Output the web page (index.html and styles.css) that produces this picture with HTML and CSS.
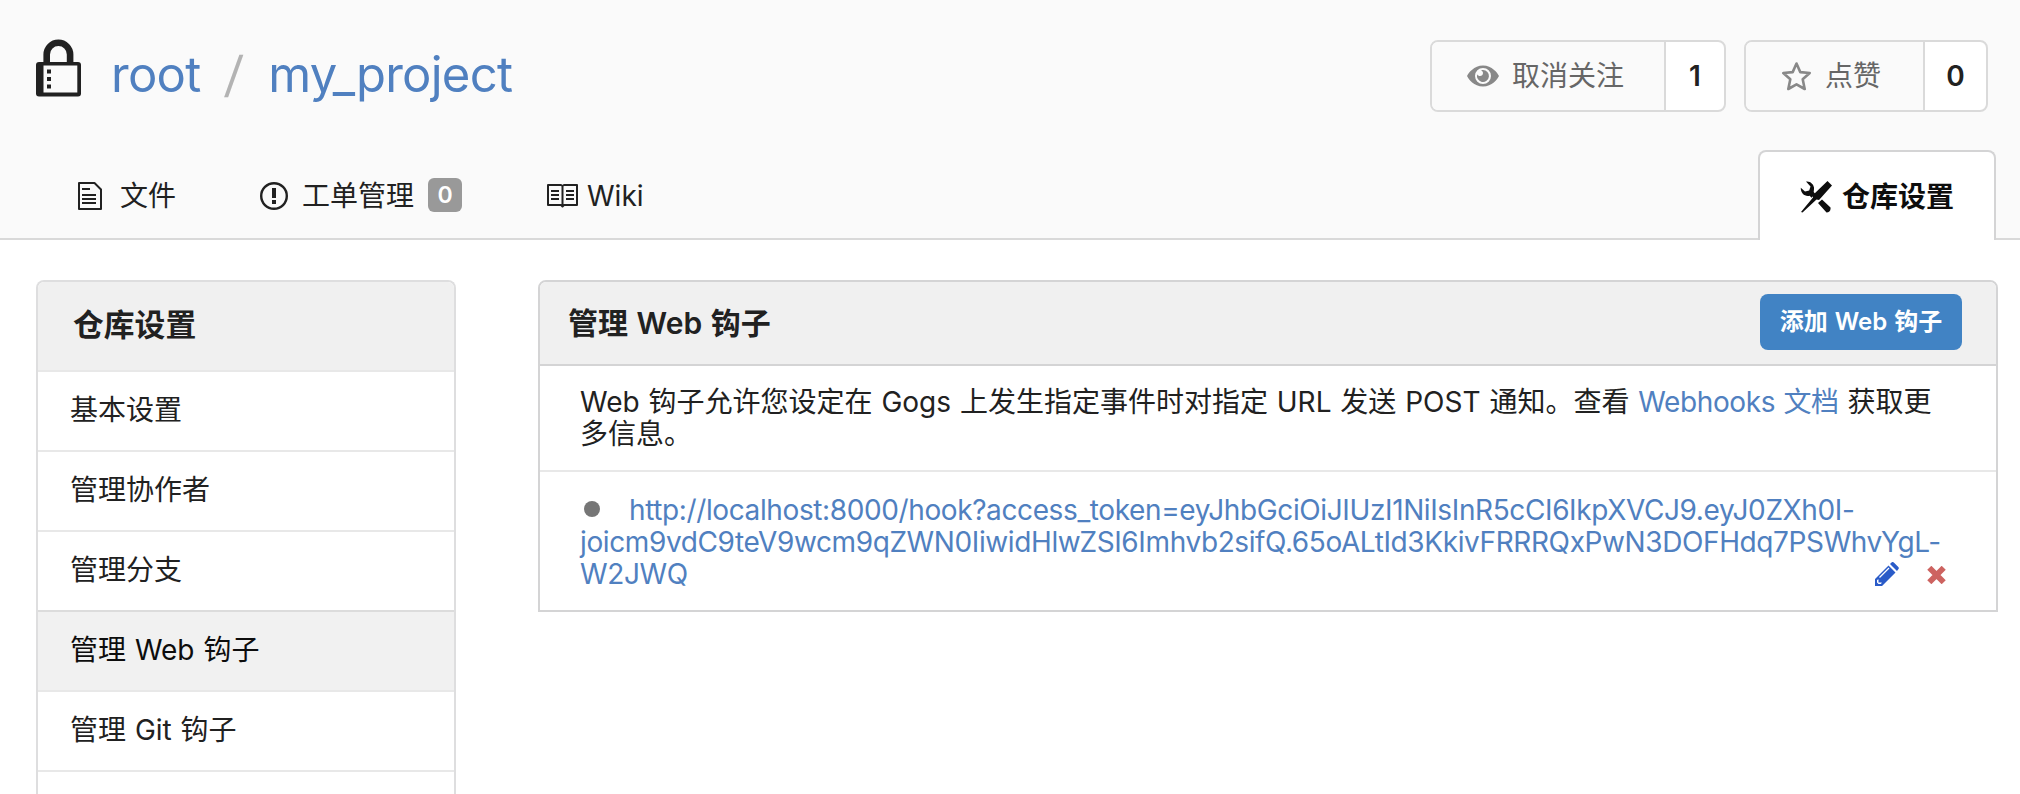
FILE: index.html
```html
<!DOCTYPE html>
<html lang="zh-CN">
<head>
<meta charset="utf-8">
<title>root/my_project</title>
<link rel="stylesheet" href="styles.css">
</head>
<body>
<header class="repo-header">
  <div class="title-row">
    <svg class="lock" viewBox="0 0 45 58"><path fill="none" stroke="#212121" stroke-width="6.6" d="M10.700 26V15.500a11.700 11.700 0 0 1 23.400 0V26"/><rect y="23" width="45" height="34.500" rx="3" fill="#212121"/><path fill="#fafafa" d="M7.500 26.500h33.800v27H7.500z"/><path fill="#212121" d="M11 30.500h4v4h-4zM11 38h4v4h-4zM11 45.500h4v4h-4z"/></svg>
    <h1 class="repo-name"><a>root</a><span class="slash">/</span><a>my_project</a></h1>
    <div class="repo-actions">
      <div class="action watch">
        <div class="action-label">
          <svg class="eye" viewBox="0 0 32 22"><path fill="#888" fill-rule="evenodd" d="M16 .5C7 .5 1.500 8 0 11c1.500 3 7 10.500 16 10.500S30.500 14 32 11C30.500 8 25 .5 16 .5zM16 3a8 8 0 1 1 0 16 8 8 0 0 1 0-16z"/><path fill="#888" d="M16 5c-.8 0-1.300.1-2 .3 1.300.6 2 1.600 2 2.800 0 1.700-1.300 3-3 3-1.200 0-2.300-.7-2.800-1.800A6 6 0 1 0 16 5z"/></svg>
          <span>取消关注</span>
        </div>
        <div class="count">1</div>
      </div>
      <div class="action star">
        <div class="action-label">
          <svg class="star-icon" viewBox="0 0 29 29"><path fill="none" stroke="#888" stroke-width="2.600" stroke-linejoin="round" d="M14.500 1.500l3.800 8.600 9.400.9-7 6.300 2 9.700-8.200-4.700L6.300 27l2-9.700-7-6.300 9.400-.9z"/></svg>
          <span>点赞</span>
        </div>
        <div class="count">0</div>
      </div>
    </div>
  </div>
  <nav class="tabs">
    <a class="tab files"><svg class="file-icon" viewBox="0 0 24 28"><path fill="none" stroke="#212121" stroke-width="2" stroke-linejoin="round" d="M1 1h15.500L23 7.500V27H1z"/><path fill="#212121" d="M4 6h8v2H4zM4 12h14v2H4zM4 16h14v2H4zM4 20h14v2H4z"/></svg><span>文件</span></a>
    <a class="tab issues"><svg class="issue-icon" viewBox="0 0 28 28"><circle cx="14" cy="14" r="12.800" fill="none" stroke="#212121" stroke-width="2.400"/><path fill="#212121" d="M12 6h4v10h-4zM12 18h4v4h-4z"/></svg><span>工单管理</span><span class="badge">0</span></a>
    <a class="tab wiki"><svg class="wiki-icon" viewBox="0 0 31 24"><path fill="none" stroke="#212121" stroke-width="2" stroke-linejoin="round" d="M1 1h13l1.500 1L17 1h13v20H17l-1.500 1.500L14 21H1zM15.500 2v20"/><path fill="#212121" d="M4 6h8v2H4zM4 10h8v2H4zM4 14h8v2H4zM19 6h8v2h-8zM19 10h8v2h-8zM19 14h8v2h-8z"/></svg><span>Wiki</span></a>
    <a class="tab active"><svg class="tools" viewBox="0 0 32 32"><path fill="#0d0d0d" d="M6 .5c4-.8 7.500 2.500 8 6 .2 2-.3 3.500-.3 4.500l1.600 2-3.800 3.800-1.800-2C4.500 16 .5 12 .8 6.800l4.200 3.700 4.200-1 1.300-4zM27.500 0L32 4.500 19 19l-2.500-.5L2.500 31.500l-1.500-.5 12-14.500L13 14zM18 22l4-3.500 8.500 8c.5 3-1.500 5-4 5z"/></svg><span>仓库设置</span></a>
  </nav>
</header>
<main class="content">
  <aside class="menu">
    <div class="menu-head">仓库设置</div>
    <a class="item">基本设置</a>
    <a class="item">管理协作者</a>
    <a class="item before-active">管理分支</a>
    <a class="item current">管理 Web 钩子</a>
    <a class="item">管理 Git 钩子</a>
  </aside>
  <section class="panel">
    <div class="panel-head"><h2>管理 Web 钩子</h2><a class="button">添加 Web 钩子</a></div>
    <div class="desc">Web 钩子允许您设定在 Gogs 上发生指定事件时对指定 URL 发送 POST 通知。查看 <a>Webhooks 文档</a> 获取更<br>多信息。</div>
    <div class="hook">
      <a class="hook-url"><span class="dot"></span>http://localhost:8000/hook?access_token=eyJhbGciOiJIUzI1NiIsInR5cCI6IkpXVCJ9.eyJ0ZXh0I-<br>joicm9vdC9teV9wcm9qZWN0IiwidHlwZSI6Imhvb2sifQ.65oALtId3KkivFRRRQxPwN3DOFHdq7PSWhvYgL-<br>W2JWQ</a>
      <div class="hook-tools">
        <svg class="pencil" viewBox="0 0 24 24"><path fill="#2a5bc8" d="M0 24v-7L13.500 3.500l7 7L7 24zM15 2l1.500-1.500c.7-.7 1.600-.7 2.300 0l4.500 4.500c.7.700.7 1.600 0 2.300L22 9z"/><path fill="none" stroke="#fff" stroke-width="1.200" d="M4.500 15.500L14 6"/><path fill="#fff" d="M2 18l1.500-.8v3.300h3.300L6 22H3.500L2 20.500z"/></svg>
        <svg class="remove" viewBox="0 0 18 18"><path stroke="#cd6360" stroke-width="5.800" d="M1.800 1.800l14.400 14.400M16.200 1.800L1.800 16.200"/></svg>
      </div>
    </div>
  </section>
</main>
</body>
</html>
```

FILE: styles.css
```css
* { box-sizing: border-box; }
html { overflow: hidden; }
body { margin: 0; height: 794px; overflow: hidden; background: #fff; color: #212121; font: 28px/32px Inter, "Noto Sans CJK SC", sans-serif; word-spacing: 1px; }
svg { display: block; flex: none; }
a { color: #5080c0; }
.repo-header { height: 240px; background: #fafafa; border-bottom: 2px solid #d9d9d9; }
.title-row { height: 150px; padding: 39px 32px 0 36px; display: flex; align-items: flex-start; }
.lock { width: 45px; height: 58px; }
.repo-name { margin: 0 0 0 30px; padding-top: 8px; font-size: 49px; line-height: 56px; letter-spacing: -0.75px; font-weight: 400; display: flex; }
.slash { color: #b3b3b3; margin: 0 26px 0 25px; transform: skewX(-5deg); }
.repo-actions { margin: 1px 0 0 auto; display: flex; gap: 18px; }
.action { display: flex; height: 72px; border: 2px solid #dadada; border-radius: 8px; background: #fff; overflow: hidden; }
.action-label { background: #fafafa; color: #666; display: flex; align-items: center; border-right: 2px solid #dadada; }
.watch { width: 296px; }
.watch .action-label { width: 234px; padding-left: 35px; }
.star { width: 244px; }
.star .action-label { width: 179px; padding-left: 36px; }
.eye { width: 32px; height: 22px; margin-right: 13px; }
.star-icon { width: 29px; height: 29px; margin-right: 14px; }
.count { flex: 1; display: flex; align-items: center; justify-content: center; font-weight: 600; }
.tabs { height: 90px; padding: 0 24px 0 78px; display: flex; align-items: flex-start; }
.tab { height: 90px; padding-top: 2px; display: flex; align-items: center; color: #212121; }
.file-icon { width: 24px; height: 28px; margin-right: 18px; }
.issues { margin-left: 84px; }
.issue-icon { width: 28px; height: 28px; margin-right: 14px; }
.badge { width: 34px; height: 34px; margin: 0 0 2px 14px; border-radius: 6px; background: #999; color: #fff; font-weight: 600; font-size: 23px; line-height: 34px; text-align: center; }
.wiki { margin-left: 85px; }
.wiki-icon { width: 31px; height: 24px; margin-right: 9px; }
.tab.active { margin-left: auto; width: 238px; padding-left: 40px; border: 2px solid #d4d4d5; border-bottom: 0; border-radius: 8px 8px 0 0; background: #fff; color: #0d0d0d; font-weight: 700; }
.tools { width: 32px; height: 32px; margin-right: 10px; }
.content { display: flex; align-items: flex-start; gap: 82px; padding: 40px 22px 0 36px; }
.menu { width: 420px; height: 514px; flex: none; border: 2px solid #dededf; border-bottom: 0; border-radius: 8px 8px 0 0; overflow: hidden; }
.menu-head { height: 90px; padding-left: 35px; border-bottom: 2px solid #e8e8e8; background: #f0f0f0; font-size: 30.800px; line-height: 86px; font-weight: 700; }
.item { display: block; height: 80px; padding-left: 32px; border-bottom: 2px solid #e8e8e8; line-height: 76px; color: #212121; }
.before-active { border-bottom-color: #dcdcdc; }
.current { background: #f1f1f1; color: #0d0d0d; }
.panel { flex: 1; border: 2px solid #d4d4d5; border-radius: 8px 8px 0 0; }
.panel-head { height: 84px; padding: 12px 34px 0 28px; display: flex; justify-content: space-between; background: #f0f0f0; border-bottom: 2px solid #d4d4d5; border-radius: 6px 6px 0 0; }
.panel-head h2 { margin: 0; font-size: 30px; line-height: 58px; font-weight: 600; }
.button { width: 202px; height: 56px; border-radius: 8px; background: #4183c4; color: #fff; font-size: 24px; line-height: 56px; font-weight: 600; text-align: center; }
.desc { height: 106px; padding: 20px 0 0 40px; border-bottom: 2px solid #e8e8e8; white-space: nowrap; }
.desc a { letter-spacing: -0.4px; }
.hook { height: 138px; padding: 22px 50px 0 40px; display: flex; align-items: flex-start; white-space: nowrap; }
.dot { display: inline-block; width: 16px; height: 16px; margin: 0 29px 3px 4px; border-radius: 50%; background: #767676; }
.hook-url { flex: 1; width: 0; letter-spacing: -0.385px; }
.hook-tools { display: flex; align-items: center; gap: 28px; padding-top: 68px; }
.pencil { width: 24px; height: 24px; }
.remove { width: 19px; height: 18px; margin-top: 2px; }
```
